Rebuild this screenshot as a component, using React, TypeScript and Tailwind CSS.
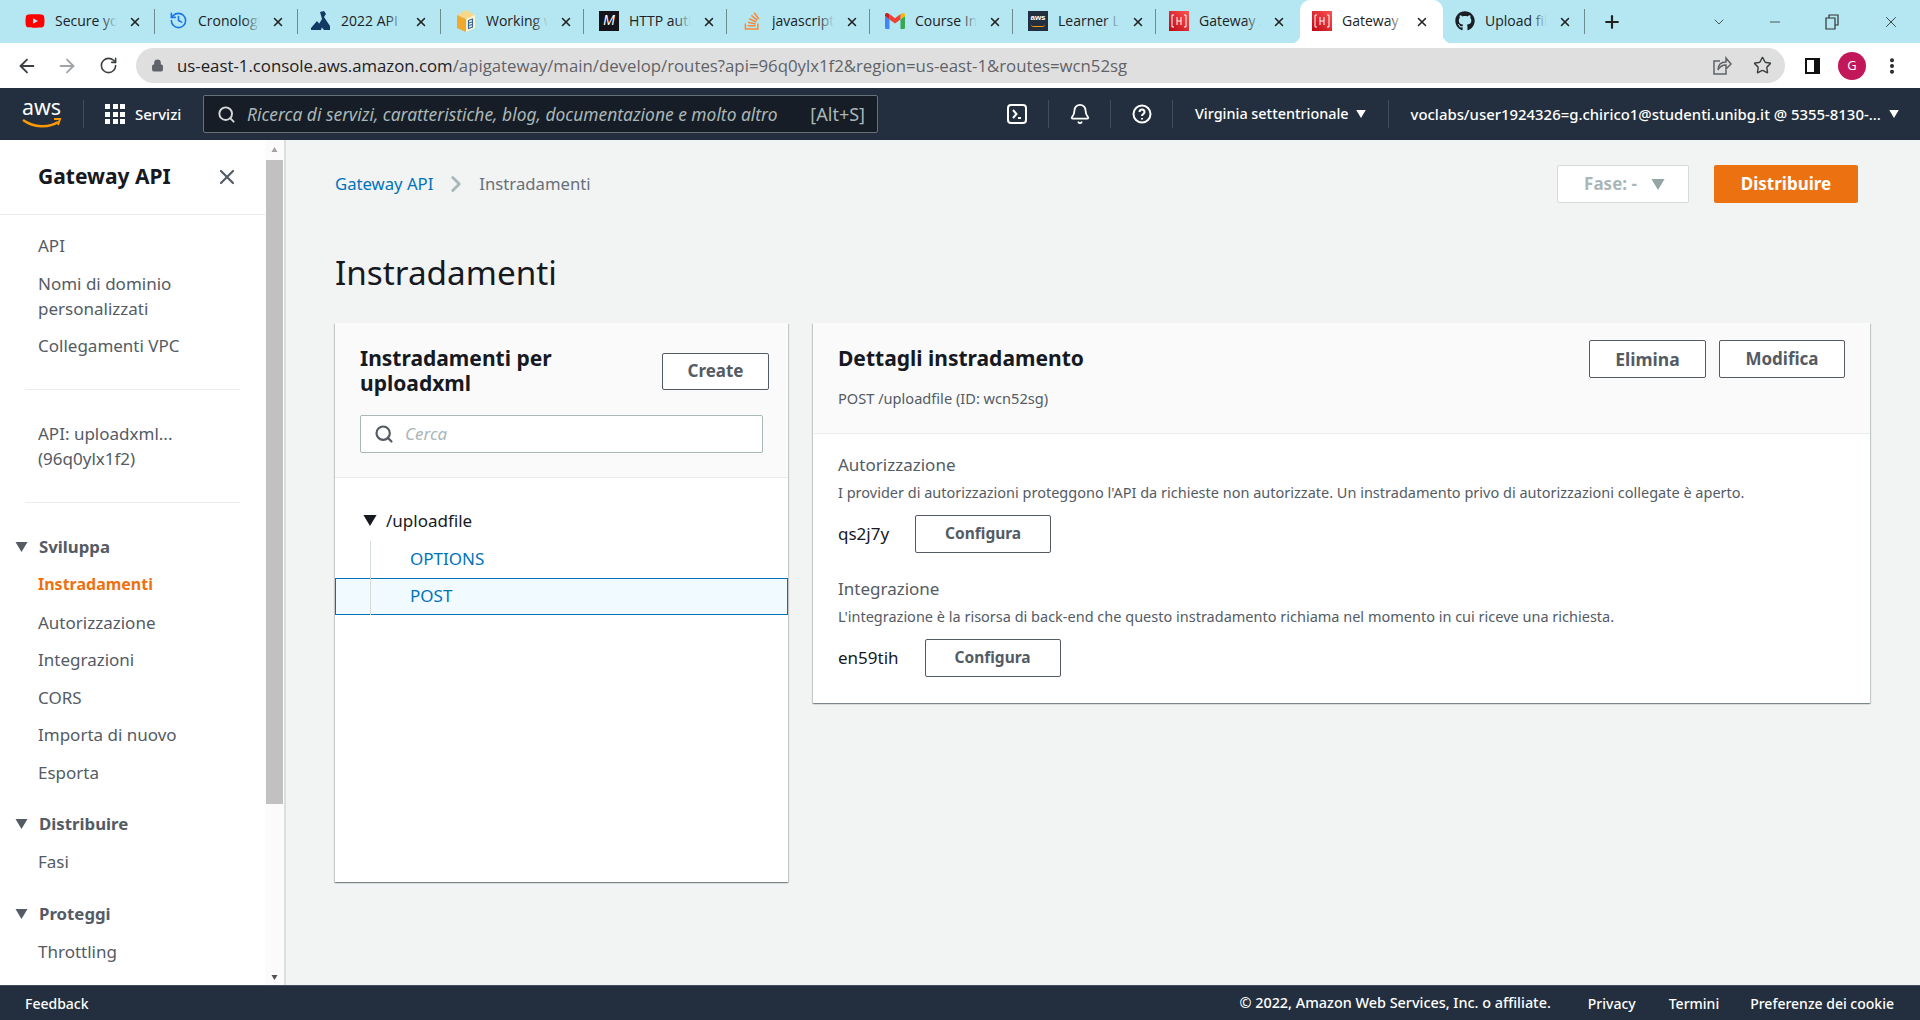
import React from "react";
import { ArrowLeft, ArrowRight, RotateCw, Lock, Star, X, Plus, Minus, ChevronDown, Search, Bell, MoreVertical, History, ChevronRight } from "lucide-react";
import { FaGithub, FaStackOverflow, FaYoutube } from "react-icons/fa";

const chrome = { fontFamily: '"Open Sans", "Noto Sans", sans-serif' };

function Caret({ className }: { className: string }) {
  return (
    <svg viewBox="0 0 12 10" className={className} fill="currentColor">
      <path d="M0 0h12L6 10z" />
    </svg>
  );
}

function ApiGw() {
  return (
    <svg viewBox="0 0 20 20" className="h-[20px] w-[20px]">
      <defs>
        <linearGradient id="gw" x1="0" y1="1" x2="1" y2="0">
          <stop offset="0" stopColor="#bd0816" />
          <stop offset="1" stopColor="#ff5252" />
        </linearGradient>
      </defs>
      <rect width="20" height="20" fill="url(#gw)" />
      <path d="M5 4H3v12h2M15 4h2v12h-2M8 6v8M12 6v8M8 10h4" stroke="#fff" strokeWidth="1" fill="none" />
    </svg>
  );
}

function Gmail() {
  return (
    <svg viewBox="0 0 20 16" className="h-[16px] w-[20px]">
      <path d="M0 3v11.5A1.5 1.5 0 001.5 16H4.5V6.5z" fill="#4285f4" />
      <path d="M15.5 6.5V16h3a1.5 1.5 0 001.5-1.5V3z" fill="#34a853" />
      <path d="M15.5 1v5.5L20 3V2c0-2-2-2.6-3-1.6z" fill="#fbbc04" />
      <path d="M4.5 6.5V1L10 5.2 15.5 1v5.5L10 10.6z" fill="#ea4335" />
      <path d="M0 2v1l4.5 3.5V1L3 .4C2 -.6 0 0 0 2z" fill="#c5221f" />
    </svg>
  );
}

const tabs: { title: string; icon: React.ReactNode; shift?: boolean }[] = [
  { title: "Secure your", icon: <FaYoutube className="h-[20px] w-[20px] text-[#f00]" /> },
  { title: "Cronologia", icon: <History className="h-[19px] w-[19px] text-[#1a73e8]" /> },
  {
    title: "2022 API",
    icon: (
      <svg viewBox="0 0 20 20" className="h-[20px] w-[20px]" fill="#123a63">
        <path d="M9 1l4-1 2 3-2 3 6 9v4h-6l-5-6 3-5zM6 10l5 6-1 3H0v-2z" />
      </svg>
    ),
  },
  {
    title: "Working w",
    shift: true,
    icon: (
      <svg viewBox="0 0 20 22" className="h-[22px] w-[20px]">
        <path d="M1 5l9-5 9 5-9 4z" fill="#f7d78b" />
        <path d="M1 5l9 4v13l-9-4z" fill="#f0a92c" />
        <path d="M19 5l-9 4v13l9-4z" fill="#fff2cf" />
        <path d="M12.5 10.5l4-1.5v8l-4 1.5zM13 13l3-1M13 15.5l3-1" stroke="#33679b" strokeWidth="1.1" fill="none" />
      </svg>
    ),
  },
  {
    title: "HTTP auth",
    shift: true,
    icon: (
      <span className="flex h-[20px] w-[20px] items-center justify-center bg-[#15141a] text-[14px] italic text-white" style={{ fontFamily: '"Liberation Sans", sans-serif' }}>
        M
      </span>
    ),
  },
  { title: "javascript", shift: true, icon: <FaStackOverflow className="h-[20px] w-[20px] text-[#f48c3c]" /> },
  { title: "Course In", shift: true, icon: <Gmail /> },
  {
    title: "Learner La",
    shift: true,
    icon: (
      <span className="relative flex h-[20px] w-[20px] justify-center bg-[#232f3e] text-[8px] font-bold leading-[14px] text-white" style={{ fontFamily: '"Liberation Sans", sans-serif' }}>
        aws
        <span className="absolute bottom-[4px] left-[3px] h-[3px] w-[14px] rounded-b-full border-b border-[#f90]" />
      </span>
    ),
  },
  { title: "Gateway API", icon: <ApiGw /> },
  { title: "Gateway API", icon: <ApiGw /> },
  { title: "Upload file", icon: <FaGithub className="h-[20px] w-[20px] text-[#1b1f23]" /> },
];

function Tab({ title, icon, active, shift, noSep }: { title: string; icon: React.ReactNode; active?: boolean; shift?: boolean; noSep?: boolean }) {
  return (
    <div className={`relative flex h-[43px] w-[143px] shrink-0 items-center pb-[2px] ${shift ? "pl-[14px] pr-[12px]" : "pl-[12px] pr-[14px]"} ${active ? "rounded-t-[10px] bg-white" : ""}`}>
      <span className="flex w-[20px] shrink-0 items-center justify-center">{icon}</span>
      <span className="relative ml-[10px] w-[62px] overflow-hidden whitespace-nowrap text-[14px] text-[#202124]">
        {title}
        <span className={`absolute inset-y-0 right-0 w-[16px] bg-gradient-to-r from-transparent ${active ? "to-white" : "to-[#b5e7f3]"}`} />
      </span>
      <X className="ml-auto mt-[2px] h-[14px] w-[14px] text-[#222]" strokeWidth={2.6} />
      {!noSep && <span className="absolute right-[1px] top-[9px] h-[25px] w-px bg-[#6e8a92]" />}
      {active && <span className="absolute bottom-0 left-[-8px] h-[8px] w-[8px] rounded-br-[8px] shadow-[3px_3px_0_0_#fff]" />}
      {active && <span className="absolute bottom-0 right-[-8px] h-[8px] w-[8px] rounded-bl-[8px] shadow-[-3px_3px_0_0_#fff]" />}
    </div>
  );
}

function TabStrip() {
  return (
    <div className="flex h-[43px] shrink-0 items-center overflow-hidden bg-[#b5e7f3] pl-[13px]" style={chrome}>
      {tabs.map((t, i) => (
        <Tab key={i} title={t.title} icon={t.icon} shift={t.shift} active={i === 9} noSep={i === 8 || i === 9} />
      ))}
      <Plus className="ml-[16px] h-[20px] w-[20px] text-[#222]" strokeWidth={2.6} />
      <ChevronDown className="ml-[89px] h-[16px] w-[16px] text-[#333]" strokeWidth={1.2} />
      <Minus className="ml-[40px] h-[16px] w-[16px] text-[#333]" strokeWidth={1.2} />
      <svg viewBox="0 0 14 16" fill="none" stroke="#333" strokeWidth="1.2" className="ml-[42px] h-[16px] w-[14px]">
        <path d="M1 4h9v11H1zM4 4V1h9v10h-3" />
      </svg>
      <X className="ml-[43px] h-[18px] w-[18px] text-[#333]" strokeWidth={1.2} />
    </div>
  );
}

function ShareBox() {
  return (
    <svg viewBox="0 0 20 20" fill="none" stroke="#5f6368" strokeWidth="1.5" className="ml-auto h-[20px] w-[20px]">
      <path d="M8 5H2v13h12v-4" />
      <path d="M6 14c0-5 3-8 8-8V2l5 6-5 5V9c-4 0-6 1-8 5z" />
    </svg>
  );
}

function Toolbar() {
  return (
    <div className="flex h-[45px] shrink-0 items-center bg-white pl-[16px]" style={chrome}>
      <ArrowLeft className="h-[22px] w-[22px] text-[#3c4043]" strokeWidth={2} />
      <ArrowRight className="ml-[18px] h-[22px] w-[22px] text-[#a0a4a8]" strokeWidth={2} />
      <RotateCw className="ml-[21px] h-[19px] w-[19px] text-[#3c4043]" strokeWidth={2} />
      <div className="ml-[18px] flex h-[35px] w-[1649px] items-center rounded-full bg-[#dfdfdf] pl-[15px] pr-[13px]">
        <Lock className="h-[13px] w-[13px] fill-[#5f6368] text-[#5f6368]" strokeWidth={2} />
        <span className="ml-[13px] whitespace-nowrap text-[16.8px] text-[#202124]">
          us-east-1.console.aws.amazon.com<span className="text-[#5f6368]">/apigateway/main/develop/routes?api=96q0ylx1f2&amp;region=us-east-1&amp;routes=wcn52sg</span>
        </span>
        <ShareBox />
        <Star className="ml-[21px] h-[19px] w-[19px] text-[#3c4043]" strokeWidth={1.8} />
      </div>
      <span className="ml-[20px] h-[16px] w-[15px] border-[2.5px] border-r-[6px] border-[#111]" />
      <span className="ml-[18px] flex h-[28px] w-[28px] items-center justify-center rounded-full bg-[#c2185b] text-[13px] text-white">G</span>
      <MoreVertical className="ml-[16px] h-[20px] w-[20px] text-[#222]" strokeWidth={2.8} />
    </div>
  );
}

function AwsLogo() {
  return (
    <svg viewBox="0 0 40 32" className="h-[32px] w-[40px]">
      <text x="0" y="17" fill="#fff" fontSize="21" fontFamily='"Noto Sans", sans-serif' textLength="39" lengthAdjust="spacingAndGlyphs">aws</text>
      <path d="M1 22c11 8 26 8 35 2" stroke="#f90" strokeWidth="2.4" fill="none" />
      <path d="M32 21l6 0-2 6" stroke="#f90" strokeWidth="2" fill="none" />
    </svg>
  );
}

function AwsNav() {
  const sep = "h-[28px] w-px bg-[#414d5c]";
  return (
    <div className="flex h-[52px] shrink-0 items-center bg-[#232f3e] pl-[22px] text-white" style={{ fontFamily: '"Noto Sans", sans-serif' }}>
      <AwsLogo />
      <span className={`ml-[21px] ${sep}`} />
      <span className="ml-[21px] grid h-[20px] w-[20px] grid-cols-3 gap-[2.5px]">
        {Array.from({ length: 9 }).map((_, i) => (
          <span key={i} className="bg-white" />
        ))}
      </span>
      <span className="ml-[10px] w-[47px] text-[15px] font-medium">Servizi</span>
      <div className="ml-[21px] flex h-[38px] w-[675px] items-center rounded-[2px] border border-[#687078] bg-[#161d26] pl-[13px] pr-[12px] text-[#aab7b8]">
        <Search className="h-[19px] w-[19px] text-[#d5dbdb]" strokeWidth={2.4} />
        <span className="ml-[11px] whitespace-nowrap text-[17.4px] italic">Ricerca di servizi, caratteristiche, blog, documentazione e molto altro</span>
        <span className="ml-auto text-[18px]">[Alt+S]</span>
      </div>
      <svg viewBox="0 0 20 20" fill="none" stroke="#fff" strokeWidth="2" className="ml-[129px] h-[20px] w-[20px]">
        <rect x="1" y="1" width="18" height="18" rx="3" />
        <path d="M6 6l3.5 4L6 14M11 14h3" />
      </svg>
      <span className={`ml-[21px] ${sep}`} />
      <Bell className="ml-[20px] h-[22px] w-[22px]" strokeWidth={2} />
      <span className={`ml-[19px] ${sep}`} />
      <svg viewBox="0 0 20 20" fill="none" stroke="#fff" strokeWidth="2" className="ml-[21px] h-[20px] w-[20px]">
        <circle cx="10" cy="10" r="8.5" />
        <path d="M7.5 8a2.5 2.5 0 115 0c0 2-2.5 2-2.5 4M10 14v1.5" />
      </svg>
      <span className={`ml-[20px] ${sep}`} />
      <span className="ml-[22px] whitespace-nowrap text-[14.4px] font-medium">Virginia settentrionale</span>
      <Caret className="ml-[7px] h-[8px] w-[10px]" />
      <span className={`ml-[22px] ${sep}`} />
      <span className="ml-[22px] whitespace-nowrap text-[14.9px] font-medium">voclabs/user1924326=g.chirico1@studenti.unibg.it @ 5355-8130-...</span>
      <Caret className="ml-[8px] h-[8px] w-[10px]" />
    </div>
  );
}

function NavItem({ children, active }: { children: React.ReactNode; active?: boolean }) {
  return <div className={`leading-[25px] ${active ? "text-[16px] font-bold text-[#ec7211]" : "text-[17px]"}`}>{children}</div>;
}

function NavSection({ title, items, className }: { title: string; items: string[]; className: string }) {
  return (
    <div className={className}>
      <div className="relative pl-[39px] text-[16.8px] font-bold leading-[25px] text-[#545b64]">
        <Caret className="absolute left-[15px] top-[8px] h-[10px] w-[13px] text-[#545b64]" />
        {title}
      </div>
      <div className="mt-[13px] flex flex-col gap-[12.6px] pl-[38px]">
        {items.map((it) => (
          <NavItem key={it} active={it === "Instradamenti"}>{it}</NavItem>
        ))}
      </div>
    </div>
  );
}

function Sidebar() {
  return (
    <aside className="flex w-[286px] shrink-0 border-r-2 border-[#dcdfdf] bg-white text-[#545b64]">
      <div className="w-[265px] shrink-0 overflow-hidden">
        <div className="flex h-[75px] items-center border-b border-[#eaeded] pl-[38px] pr-[26px]">
          <span className="text-[21px] font-bold text-[#16191f]">Gateway API</span>
          <X className="ml-auto h-[24px] w-[24px]" strokeWidth={2.2} />
        </div>
        <div className="flex flex-col gap-[12.5px] pl-[38px] pt-[18px]">
          <NavItem>API</NavItem>
          <NavItem>Nomi di dominio<br />personalizzati</NavItem>
          <NavItem>Collegamenti VPC</NavItem>
        </div>
        <div className="mx-[25px] mt-[31px] border-t border-[#eaeded]" />
        <div className="pl-[38px] pt-[31px]">
          <NavItem>API: uploadxml...<br />(96q0ylx1f2)</NavItem>
        </div>
        <div className="mx-[25px] mt-[31px] border-t border-[#eaeded]" />
        <NavSection className="mt-[31px]" title="Sviluppa" items={["Instradamenti", "Autorizzazione", "Integrazioni", "CORS", "Importa di nuovo", "Esporta"]} />
        <NavSection className="mt-[26px]" title="Distribuire" items={["Fasi"]} />
        <NavSection className="mt-[27px]" title="Proteggi" items={["Throttling"]} />
      </div>
      <div className="flex w-[19px] flex-col items-center bg-[#fbfbfb] pb-[5px] pl-px pr-px">
        <Caret className="mt-[7px] h-[5px] w-[9px] rotate-180 text-[#a3a3a3]" />
        <div className="mt-[8px] h-[644px] w-[17px] bg-[#c1c1c1]" />
        <Caret className="mt-auto h-[5px] w-[9px] text-[#505050]" />
      </div>
    </aside>
  );
}

const btn = "flex items-center justify-center rounded-[2px] border border-[#545b64] bg-white font-bold text-[#545b64]";
const cardShadow = "shadow-[0_1px_1px_0_rgba(0,28,36,0.3),1px_1px_1px_0_rgba(0,28,36,0.15),-1px_1px_1px_0_rgba(0,28,36,0.15)]";

function Routes() {
  return (
    <section className={`flex h-[559px] w-[453px] shrink-0 flex-col bg-white ${cardShadow}`}>
      <div className="h-[155px] border-b border-[#eaeded] bg-[#fafafa] pl-[25px] pr-[19px] pt-[23px]">
        <div className="flex items-start justify-between">
          <h2 className="w-[220px] text-[21px] font-bold leading-[25px] text-[#16191f]">Instradamenti per uploadxml</h2>
          <button className={`${btn} mt-[7px] h-[37px] w-[107px] pb-[2px] text-[17px]`}>Create</button>
        </div>
        <div className="mt-[19px] flex h-[38px] w-[403px] items-center rounded-[2px] border border-[#aab7b8] bg-white pl-[13px]">
          <Search className="h-[20px] w-[20px] text-[#545b64]" strokeWidth={2.6} />
          <span className="ml-[11px] text-[17px] italic text-[#aab7b8]">Cerca</span>
        </div>
      </div>
      <div className="flex items-center pl-[28px] pt-[30px] leading-[25px]">
        <Caret className="h-[11px] w-[14px] text-[#16191f]" />
        <span className="ml-[9px] text-[17px] text-[#16191f]">/uploadfile</span>
      </div>
      <div className="relative mt-[8px] flex flex-col text-[17px] text-[#0073bb]">
        <div className="flex h-[37px] items-center pb-[2px] pl-[75px]">OPTIONS</div>
        <div className="flex h-[37px] items-center border border-[#0073bb] bg-[#f1faff] pb-[2px] pl-[74px]">POST</div>
        <span className="absolute inset-y-0 left-[35px] w-px bg-[#d5dbdb]" />
      </div>
    </section>
  );
}

function ConfigRow({ label, title, desc }: { label: string; title: string; desc: string }) {
  return (
    <div>
      <div className="text-[17px] leading-[25px] text-[#545b64]">{title}</div>
      <div className="mt-[5px] text-[14.5px] leading-[20px] text-[#545b64]">{desc}</div>
      <div className="mt-[13px] flex items-center gap-[26px]">
        <span className="text-[17px] text-[#16191f]">{label}</span>
        <button className={`${btn} h-[38px] w-[136px] text-[15.5px]`}>Configura</button>
      </div>
    </div>
  );
}

function Details() {
  return (
    <section className={`flex h-[380px] flex-1 flex-col bg-white ${cardShadow}`}>
      <div className="h-[111px] border-b border-[#eaeded] bg-[#fafafa] pl-[25px] pr-[25px] pt-[17px]">
        <div className="flex items-center justify-between">
          <h2 className="text-[21px] font-bold text-[#16191f]">Dettagli instradamento</h2>
          <div className="flex gap-[13px]">
            <button className={`${btn} h-[38px] w-[117px] text-[17.5px]`}>Elimina</button>
            <button className={`${btn} h-[38px] w-[126px] text-[17px]`}>Modifica</button>
          </div>
        </div>
        <div className="mt-[10px] text-[14.6px] leading-[20px] text-[#545b64]">POST /uploadfile (ID: wcn52sg)</div>
      </div>
      <div className="flex flex-col gap-[23px] pl-[25px] pt-[18px]">
        <ConfigRow title="Autorizzazione" desc="I provider di autorizzazioni proteggono l'API da richieste non autorizzate. Un instradamento privo di autorizzazioni collegate è aperto." label="qs2j7y" />
        <ConfigRow title="Integrazione" desc="L'integrazione è la risorsa di back-end che questo instradamento richiama nel momento in cui riceve una richiesta." label="en59tih" />
      </div>
    </section>
  );
}

function Main() {
  return (
    <main className="min-w-0 flex-1 bg-[#f2f3f3] pl-[49px] pr-[50px] pt-[25px]">
      <div className="flex h-[38px] items-center pr-[12px] text-[16.7px]">
        <span className="text-[#0073bb]">Gateway API</span>
        <ChevronRight className="ml-[10px] h-[26px] w-[26px] text-[#aab7b8]" strokeWidth={2.6} />
        <span className="ml-[10px] text-[#687078]">Instradamenti</span>
        <div className="ml-auto flex h-[38px] w-[132px] items-center justify-center rounded-[2px] border border-[#d5dbdb] bg-white pl-[3px] text-[17px] font-bold text-[#aab7b8]">
          Fase: -
          <Caret className="ml-[14px] h-[11px] w-[14px] text-[#95a5a6]" />
        </div>
        <button className="ml-[25px] flex h-[38px] w-[144px] items-center justify-center rounded-[2px] bg-[#ec7211] text-[17px] font-bold text-white">Distribuire</button>
      </div>
      <h1 className="mt-[44px] text-[33.3px] leading-[50px] text-[#16191f]">Instradamenti</h1>
      <div className="mt-[26px] flex items-start gap-[25px]">
        <Routes />
        <Details />
      </div>
    </main>
  );
}

function Footer() {
  return (
    <footer className="flex h-[35px] shrink-0 items-center border-t border-[#414d5c] bg-[#232f3e] pl-[25px] pr-[26px] text-[14px] font-medium text-white">
      <span>Feedback</span>
      <span className="ml-auto text-[14.4px]">© 2022, Amazon Web Services, Inc. o affiliate.</span>
      <span className="ml-[37px]">Privacy</span>
      <span className="ml-[33px]">Termini</span>
      <span className="ml-[31px]">Preferenze dei cookie</span>
    </footer>
  );
}

export default function App() {
  return (
    <div className="flex h-[1020px] w-[1920px] flex-col overflow-hidden" style={{ fontFamily: '"Noto Sans", sans-serif' }}>
      <TabStrip />
      <Toolbar />
      <AwsNav />
      <div className="flex min-h-0 flex-1">
        <Sidebar />
        <Main />
      </div>
      <Footer />
    </div>
  );
}
